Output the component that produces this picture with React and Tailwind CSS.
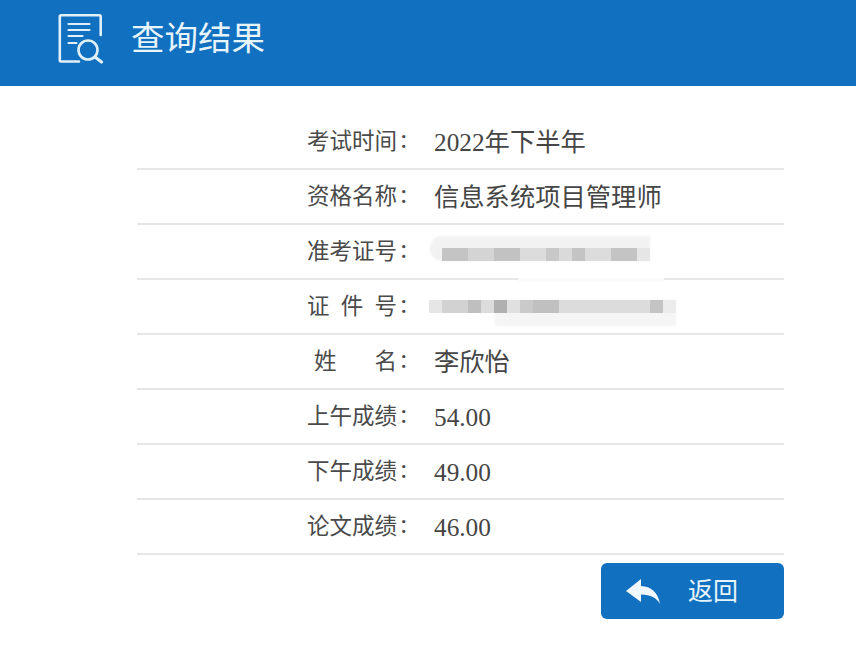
const rows = [
  { label: '考试时间', value: '2022年下半年' },
  { label: '资格名称', value: '信息系统项目管理师' },
  { label: '准考证号', mosaic: 'top' },
  { label: '证件号', mosaic: 'bottom' },
  { label: '姓名', value: '李欣怡', indent: true },
  { label: '上午成绩', value: '54.00' },
  { label: '下午成绩', value: '49.00' },
  { label: '论文成绩', value: '46.00' },
]

function ResultIcon() {
  return (
    <svg width="46" height="50" viewBox="0 0 46 50" fill="none" stroke="#dff0fb" strokeWidth="2.6" strokeLinecap="round" strokeLinejoin="round">
      <path d="M21 47.500H3a1.200 1.200 0 0 1-1.200-1.200V2.500A1.200 1.200 0 0 1 3 1.300h38.500a1.200 1.200 0 0 1 1.200 1.200V21" />
      <path d="M10.500 10h21M10.500 16h21M10.500 22h14M10.500 29h8" strokeWidth="2.200" />
      <circle cx="30" cy="36" r="9.500" />
      <path d="M37 43l6.500 5" strokeWidth="3.200" />
    </svg>
  )
}

function ReplyIcon() {
  return (
    <svg width="36" height="28" viewBox="0 0 36 28" fill="#eef8fe">
      <path d="M1 13 16 1v7c10 .5 17 6 19 18-3.500-6-9-9.500-19-9.500V24Z" />
    </svg>
  )
}

function TopMosaic() {
  return (
    <div className="absolute left-[-4px] top-[-6px] h-[42px] w-[222px]">
      <div className="absolute left-0 top-[6px] h-[25px] w-[220px] rounded-l-[12px] bg-[#f2f2f2] blur-[1px]" />
      <div className="absolute left-[12px] top-[18px] flex h-[13px]">
        <div className="w-[26px] bg-[#c4c4c4]" />
        <div className="w-[26px] bg-[#d4d4d4]" />
        <div className="w-[26px] bg-[#c2c2c2]" />
        <div className="w-[26px] bg-[#dcdcdc]" />
        <div className="w-[13px] bg-[#c8c8c8]" />
        <div className="w-[13px] bg-[#dadada]" />
        <div className="w-[13px] bg-[#c4c4c4]" />
        <div className="w-[26px] bg-[#dcdcdc]" />
        <div className="w-[26px] bg-[#c4c4c4]" />
        <div className="w-[13px] bg-[#e6e6e6]" />
      </div>
      <div className="absolute left-[88px] top-[48px] h-[4px] w-[146px] bg-[#fbfbfb]" />
    </div>
  )
}

function BottomMosaic() {
  return (
    <div className="absolute left-[-5px] top-[-5px] h-[40px] w-[248px]">
      <div className="absolute left-[66px] top-[14px] h-[26px] w-[181px] bg-[#f5f5f5] blur-[1px]" />
      <div className="absolute left-0 top-[14px] flex h-[13px]">
        <div className="w-[13px] bg-[#e6e6e6]" />
        <div className="w-[26px] bg-[#d2d2d2]" />
        <div className="w-[13px] bg-[#bfbfbf]" />
        <div className="w-[13px] bg-[#dcdcdc]" />
        <div className="w-[13px] bg-[#b0b0b0]" />
        <div className="w-[13px] bg-[#e0e0e0]" />
        <div className="w-[13px] bg-[#cacaca]" />
        <div className="w-[26px] bg-[#c0c0c0]" />
        <div className="w-[91px] bg-[#dcdcdc]" />
        <div className="w-[13px] bg-[#c4c4c4]" />
        <div className="w-[13px] bg-[#ececec]" />
      </div>
    </div>
  )
}

function Row({ label, value, mosaic, indent }) {
  return (
    <div className="flex h-[55px] items-center border-b-2 border-[#e6e6e6]">
      <div className={`ml-[170px] mt-[2px] flex w-[90px] justify-between text-[22.500px] leading-none text-[#4a4a4a] ${indent ? 'pl-[7px]' : ''}`}>
        {[...label].map((ch, i) => (
          <span key={i}>{ch}</span>
        ))}
      </div>
      <span className="mb-[4px] ml-[3px] w-[34px] text-[27px] leading-none text-[#4a4a4a]">:</span>
      <div className="relative h-[31px] flex-1 text-[25.300px] leading-[33px] text-[#454545]">
        {value}
        {mosaic === 'top' && <TopMosaic />}
        {mosaic === 'bottom' && <BottomMosaic />}
      </div>
    </div>
  )
}

export default function App() {
  return (
    <div className="h-[647px] w-[856px] overflow-hidden bg-white font-['Liberation_Serif','Noto_Sans_CJK_SC',serif]">
      <header className="flex h-[86px] items-center bg-[#1170bf] pb-[8px] pl-[58px]">
        <ResultIcon />
        <h1 className="ml-[27px] text-[33.500px] font-normal leading-none text-[#e6f4fc]">查询结果</h1>
      </header>
      <main className="ml-[137px] mr-[72px] mt-[29px]">
        {rows.map((r) => (
          <Row key={r.label} {...r} />
        ))}
        <div className="mt-[8px] flex justify-end">
          <button className="flex h-[56px] w-[183px] items-center rounded-[6px] bg-[#1170bf] pl-[24px] pt-[1px] text-[25px] text-[#e6f4fc]">
            <ReplyIcon />
            <span className="ml-[27px] leading-none">返回</span>
          </button>
        </div>
      </main>
    </div>
  )
}
